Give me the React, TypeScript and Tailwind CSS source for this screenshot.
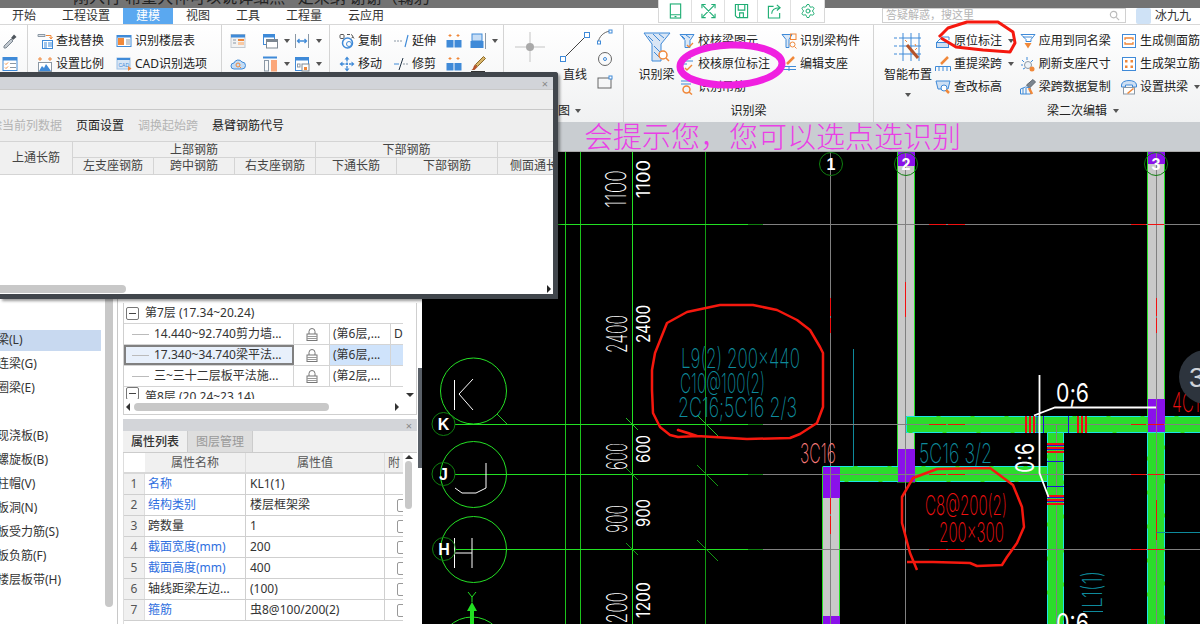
import type { ReactNode } from 'react'
import { Settings } from 'lucide-react'

const BLUE = '#3f8ad8'
const ORANGE = '#f0883a'
const GRAY = '#8b98a5'

function S({ children, w = 16, h = 16, vb = '0 0 16 16' }: { children: ReactNode; w?: number; h?: number; vb?: string }) {
  return (
    <svg width={w} height={h} viewBox={vb} fill="none" strokeWidth="1" className="shrink-0" aria-hidden="true">
      {children}
    </svg>
  )
}

const ICONS: Record<string, ReactNode> = {
  dropper: <><path d="M2 13l7-7 2 2-7 7H2z" fill="#c2c9d0" stroke="#7d8791" /><path d="M9 5l3-3.500 2.500 2.500L11 7z" fill="#4e555c" /></>,
  listCheck: <><rect x="1" y="1.500" width="14" height="13" stroke={BLUE} fill="#fff" /><rect x="1" y="1.500" width="14" height="3" fill={BLUE} /><path d="M3 7.500l1 1 2-2M3 11.500l1 1 2-2" stroke={ORANGE} /><path d="M8 7.500h6M8 11.500h6" stroke={GRAY} /></>,
  find: <><path d="M1 1.500h7v2H1z" fill="#dfe3e7" stroke={GRAY} /><path d="M9 2.500h5v3M12.500 4l1.500 2 1.500-2" stroke={ORANGE} /><rect x="5.500" y="7.500" width="10" height="8" fill="#fff" stroke={BLUE} /><path d="M7 10h3M7 12h3M7 14h3M12 9v5M14 9v5" stroke={BLUE} /></>,
  floorTable: <><rect x="1" y="2.500" width="14" height="11" stroke={BLUE} fill="#fff" /><rect x="1" y="2.500" width="14" height="2" fill={BLUE} /><rect x="2" y="5" width="6" height="7" fill={ORANGE} /><path d="M10 7h4M10 9h4M10 11h4" stroke={GRAY} /></>,
  scale: <><path d="M3 1v4M1 3h4M11 3h4M13 1v4" stroke={ORANGE} /><rect x="1.500" y="6.500" width="13" height="9" fill="#fff" stroke={GRAY} /><path d="M2 15l3-5 2 2 2-4 5 7z" fill={BLUE} /></>,
  cad: <><rect x="1" y="2" width="13" height="11" fill="#d7e6f5" stroke="#9cc0e6" /><rect x="1" y="2" width="13" height="2" fill={BLUE} /><text x="2.500" y="10.500" fontSize="5" fill={BLUE} fontFamily="Liberation Sans">CAD</text><path d="M12 10l3.500 2.500L12 15z" fill={ORANGE} /></>,
  panel: <><rect x="1" y="1.500" width="14" height="13" fill="#f2f2f2" stroke="#c3c9cf" /><rect x="1" y="1.500" width="14" height="3" fill={BLUE} /><path d="M3 7h3M3 10h3" stroke={GRAY} /><rect x="8" y="6" width="6" height="2" fill={ORANGE} /><rect x="8" y="9" width="6" height="3" fill="#f8c9a4" /></>,
  cloud: <><path d="M4 13a3 3 0 010-6 4.500 4.500 0 018-1 3.500 3.500 0 010 7z" fill="#c3dcf5" stroke={BLUE} /><circle cx="8" cy="9" r="2" stroke={ORANGE} /><path d="M9.500 10.500l1.500 1.500" stroke={ORANGE} /></>,
  windows: <><rect x="1.500" y="1.500" width="11" height="10" fill="#fff" stroke={BLUE} /><rect x="1.500" y="1.500" width="11" height="3" fill={BLUE} /><rect x="4.500" y="6.500" width="11" height="8.500" fill="#fff" stroke="#7d8791" /><rect x="4.500" y="6.500" width="11" height="2.500" fill="#7d8791" /></>,
  split: <><path d="M1 1.500h14" stroke={BLUE} strokeWidth="2" /><rect x="2.500" y="4.500" width="4" height="10.500" stroke={GRAY} /><rect x="9" y="4" width="6" height="11.500" fill="#fba77a" /></>,
  hArrow: <><path d="M1.500 1v14M14.500 1v14" stroke={GRAY} /><path d="M3.500 8h9M5.500 6l-2 2 2 2M10.500 6l2 2-2 2" stroke={BLUE} strokeWidth="1.300" /></>,
  board: <><rect x="1.500" y="1.500" width="13" height="13" stroke={BLUE} fill="#fff" /><rect x="1.500" y="1.500" width="13" height="3" fill={BLUE} /><rect x="8" y="8" width="7" height="7" fill="#fff" stroke="#7d8791" /><rect x="10" y="11" width="3" height="3" fill={ORANGE} /><rect x="3.500" y="8" width="2.500" height="3" stroke={GRAY} /></>,
  copy: <><rect x="1" y="1.500" width="4" height="4" rx="1" stroke="#555" /><path d="M8 1.500h3M12 1.500a3 3 0 012 2.500M12.500 5l1.500-1 1 1.500" stroke="#555" /><circle cx="8.500" cy="10" r="5" stroke={BLUE} strokeWidth="1.500" /><circle cx="10" cy="11" r="2.500" stroke={BLUE} /></>,
  move: <><path d="M8 0.500l-2.500 3h5zM8 15.500l-2.500-3h5zM0.500 8l3-2.500v5zM15.500 8l-3-2.500v5z" fill={BLUE} /><path d="M3 8h10M8 3v10" stroke={BLUE} strokeWidth="1.400" strokeDasharray="2.500 1" /></>,
  extend: <><path d="M1 8h9" stroke={GRAY} strokeDasharray="2 1" /><path d="M15 2l-3 12" stroke={BLUE} strokeWidth="1.200" /></>,
  trim: <><path d="M1 8h5" stroke={BLUE} /><path d="M10 8h5" stroke={GRAY} strokeDasharray="2 1" /><path d="M10 2L6 14" stroke="#234" /></>,
  cols: <><path d="M4 1v3M2.500 2.500h3M12 1v3M10.500 2.500h3" stroke={ORANGE} /><path d="M1 4l3 2 3-2M9 4l3 2 3-2" stroke={ORANGE} strokeWidth="0" /><rect x="0.500" y="7" width="7" height="7.500" fill={BLUE} /><rect x="8.500" y="7" width="7" height="7.500" fill={BLUE} /></>,
  stack: <><rect x="2" y="1" width="10" height="7" fill="#c6ddf5" stroke={BLUE} /><rect x="0.500" y="8" width="13" height="7" fill={BLUE} /><path d="M15.500 0v16" stroke={GRAY} /></>,
  brush: <><path d="M13.500 0.500l2 2-8 8-2-2z" fill="#d8b46a" stroke="#8a6a2a" /><path d="M5 8.500l2.500 2.500-3 3H1.500c2-1 1.500-3.500 3.500-5.500z" fill="#b5532a" /><path d="M1 15.500h14" stroke="#333" /></>,
  beamCheck: <><path d="M1 1.500h14l-4 6v7H6v-7z" fill="#dbe8f6" stroke={BLUE} /><path d="M3 3l3 3M7 2l4 3" stroke={BLUE} /><path d="M8 12l2 2 4-4" stroke={ORANGE} strokeWidth="1.300" /></>,
  stirrupCheck: <><path d="M2 2h10M2 5h12M2 8h6" stroke={BLUE} /><path d="M6 12l2 2 5-5" stroke={ORANGE} strokeWidth="1.400" /></>,
  beamFind: <><path d="M1 1.500h10l-3 5v8H5v-8z" fill="#dbe8f6" stroke={BLUE} /><rect x="9.500" y="1" width="5.500" height="5.500" stroke={ORANGE} /><circle cx="11.500" cy="11.500" r="2.500" stroke={ORANGE} /><path d="M13.500 13.500l2 2" stroke={ORANGE} /></>,
  hoop: <><path d="M2 2h10M2 5h10" stroke={BLUE} /><circle cx="7.500" cy="10.500" r="3.500" stroke={ORANGE} strokeWidth="1.500" /><path d="M10 13l3 2.500" stroke={ORANGE} strokeWidth="1.500" /></>,
  support: <><path d="M13 1L6 8" stroke={ORANGE} strokeWidth="2.500" /><path d="M1 10.500h14M1 13.500h14" stroke={BLUE} /><path d="M8 11v4" stroke={BLUE} /></>,
  origin: <><path d="M2 9l5-5h7v3" stroke={BLUE} /><rect x="1.500" y="9.500" width="12" height="5" fill="#cfe0f3" stroke={BLUE} /></>,
  rebeam: <><path d="M13 1L6 8" stroke={ORANGE} strokeWidth="2.500" /><path d="M0.500 15v-4.500h15V15M4 15v-4M8 15v-4M12 15v-4" stroke={BLUE} /></>,
  level: <><path d="M1 2h14l-2 8H3z" fill="#cfe0f3" stroke={BLUE} /><circle cx="9" cy="9" r="3" fill="#fff" stroke={BLUE} /><path d="M11 11l3 3" stroke={ORANGE} strokeWidth="2.500" /></>,
  applySame: <><path d="M1 1.500h14l-4 5v2H6v-2z" fill="#fff" stroke={BLUE} /><path d="M3 4h9" stroke={BLUE} /><path d="M4.500 10h7L8 15.500z" fill={ORANGE} /></>,
  refresh: <><path d="M7 1v3M2 4l2 2M13 4l-2 2M1 9h2M3 13l2-1" stroke={BLUE} /><circle cx="8" cy="9" r="3.500" fill="#eef3f8" stroke={GRAY} /><circle cx="12" cy="13" r="2.500" fill={ORANGE} /></>,
  spanCopy: <><path d="M13 0.500l2.500 2.500-6 6-3-3z" fill="#7b858f" stroke="#5d666f" /><path d="M0.500 15v-5l5-2 5 1v6z" stroke={BLUE} /><path d="M3 15v-6M6 15v-6" stroke={BLUE} /><path d="M9 9l3 6" stroke={ORANGE} strokeWidth="2.500" /></>,
  sideBar: <><rect x="1.500" y="1.500" width="13" height="13" fill="#fff" stroke={BLUE} /><path d="M4 7V5h8v2M4 9v2h8V9" stroke={ORANGE} strokeWidth="1.300" /></>,
  erect: <><rect x="1.500" y="1.500" width="13" height="13" fill="#fff" stroke={BLUE} /><path d="M4 4h2.500v2.500H4zM9.500 4H12v2.500H9.500zM4 9.500h2.500V12H4zM9.500 9.500H12V12H9.500z" fill={ORANGE} /></>,
  arch: <><path d="M0.500 6c0-6 15-6 15 0v2h-4V6h-7v2h-4z" stroke={BLUE} fill="#cfe0f3" /><rect x="2.500" y="8.500" width="11" height="6.500" fill="#fff" stroke={GRAY} /><path d="M6 14l6-5 1 1-6 5z" fill={ORANGE} /></>,
}

function Ico({ name }: { name: string }) {
  return <S>{ICONS[name]}</S>
}

function Caret({ className = '' }: { className?: string }) {
  return <span className={`inline-block w-0 h-0 border-x-[3.500px] border-x-transparent border-t-[4px] border-t-[#555] ${className}`} />
}

function Tool({ icon, label, caret }: { icon: string; label?: string; caret?: boolean }) {
  return (
    <div className="flex items-center h-[23px] gap-[3px] whitespace-nowrap">
      <Ico name={icon} />
      {label && <span>{label}</span>}
      {caret && <Caret className="ml-[3px]" />}
    </div>
  )
}

function Group({ width, label, children }: { width: string; label?: ReactNode; children: ReactNode }) {
  return (
    <div className={`${width} shrink-0 h-full flex flex-col border-r border-[#d4d4d4]`}>
      <div className="h-[75px] pt-[4px] flex">{children}</div>
      <div className="h-[22px] flex items-center justify-center gap-[6px]">{label}</div>
    </div>
  )
}

function Ribbon() {
  return (
    <div className="h-[97px] shrink-0 flex text-[12px] text-[#222] bg-gradient-to-b from-white to-[#f0f1f2] overflow-hidden">
      <Group width="w-[28px]">
        <div className="pl-[2px]">
          <Tool icon="dropper" />
          <Tool icon="listCheck" />
        </div>
      </Group>
      <Group width="w-[194px]">
        <div className="pl-[9px] w-[88px]">
          <Tool icon="find" label="查找替换" />
          <Tool icon="scale" label="设置比例" />
        </div>
        <div>
          <Tool icon="floorTable" label="识别楼层表" />
          <Tool icon="cad" label="CAD识别选项" />
        </div>
      </Group>
      <Group width="w-[108px]">
        <div className="pl-[8px] w-[40px]">
          <Tool icon="panel" />
          <Tool icon="cloud" />
        </div>
        <div className="w-[32px]">
          <Tool icon="windows" caret />
          <Tool icon="split" caret />
        </div>
        <div>
          <Tool icon="hArrow" caret />
          <Tool icon="board" caret />
        </div>
      </Group>
      <Group width="w-[174px]">
        <div className="pl-[9px] w-[63px]">
          <Tool icon="copy" label="复制" />
          <Tool icon="move" label="移动" />
        </div>
        <div className="w-[53px]">
          <Tool icon="extend" label="延伸" />
          <Tool icon="trim" label="修剪" />
        </div>
        <div className="w-[24px]">
          <Tool icon="cols" />
          <Tool icon="cols" />
        </div>
        <div>
          <Tool icon="stack" caret />
          <Tool icon="brush" />
        </div>
      </Group>
      <Group
        width="w-[120px]"
        label={
          <div className="w-full pl-[54px] flex items-center gap-[5px]">
            图 <Caret />
          </div>
        }
      >
        <div className="pl-[11px] w-[54px] pt-[3px]">
          <S w={30} h={30} vb="0 0 30 30">
            <path d="M15 0v30M0 15h30" stroke="#c4c4c4" />
            <circle cx="15" cy="15" r="4" fill="#a9a9a9" />
          </S>
        </div>
        <div className="flex flex-col items-center w-[34px] pt-[3px]">
          <S w={30} h={30} vb="0 0 30 30">
            <path d="M3 27L27 3" stroke="#444" />
            <rect x="0.500" y="24.500" width="5" height="5" fill="#fff" stroke={BLUE} />
            <rect x="24.500" y="0.500" width="5" height="5" fill="#fff" stroke={BLUE} />
          </S>
          <span className="mt-[4px]">直线</span>
        </div>
        <div className="pl-[5px]">
          <S><path d="M1 14C2 7 7 3 13 2" stroke="#666" /><rect x="12" y="1" width="3" height="3" fill="#fff" stroke={BLUE} /><rect x="0.500" y="12" width="3" height="3" fill="#fff" stroke={BLUE} /></S>
          <div className="h-[6px]" />
          <S><circle cx="8" cy="8" r="6.500" stroke="#666" /><circle cx="8" cy="8" r="1.500" stroke={BLUE} /></S>
          <div className="h-[8px]" />
          <S><rect x="1" y="3" width="13" height="10" stroke="#666" /><rect x="12" y="1" width="3" height="3" fill="#fff" stroke={BLUE} /></S>
        </div>
      </Group>
      <Group width="w-[250px]" label="识别梁">
        <div className="pl-[10px] w-[55px] flex flex-col items-center pt-[3px]">
          <S w={28} h={30} vb="0 0 28 30">
            <path d="M1 1h26l-9 11v17H9V12z" fill="#d9e6f5" stroke={BLUE} />
            <path d="M5 4l5 5M10 2l7 7M16 2l5 4M11 14l6 6M11 20l6 6" stroke={BLUE} />
            <circle cx="20" cy="23" r="4" fill="#fff" stroke={ORANGE} strokeWidth="1.500" />
            <path d="M23 26l3 3" stroke={ORANGE} strokeWidth="1.500" />
          </S>
          <span className="mt-[4px] whitespace-nowrap">识别梁</span>
        </div>
        <div className="w-[102px]">
          <Tool icon="beamCheck" label="校核梁图元" />
          <Tool icon="stirrupCheck" label="校核原位标注" />
          <Tool icon="hoop" label="识别吊筋" />
        </div>
        <div>
          <Tool icon="beamFind" label="识别梁构件" />
          <Tool icon="support" label="编辑支座" />
        </div>
      </Group>
      <div className="flex-1 h-full flex flex-col min-w-0">
        <div className="h-[75px] pt-[4px] flex">
          <div className="pl-[7px] w-[62px] flex flex-col items-center pt-[3px]">
            <S w={30} h={30} vb="0 0 30 30">
              <path d="M6 6h22M6 14h22M6 22h22M10 1v28M18 1v28M26 1v28" stroke={BLUE} />
              <path d="M14 13l11 13" stroke="#b5532a" strokeWidth="3" />
              <path d="M1 6h3M1 14h3M1 22h3" stroke={BLUE} />
              <path d="M12 8l2 2M22 18l2-2M22 12l1 2" stroke={ORANGE} />
            </S>
            <span className="mt-[4px] whitespace-nowrap">智能布置</span>
            <Caret className="mt-[9px]" />
          </div>
          <div className="w-[86px]">
            <Tool icon="origin" label="原位标注" caret />
            <Tool icon="rebeam" label="重提梁跨" caret />
            <Tool icon="level" label="查改标高" />
          </div>
          <div className="w-[103px]">
            <Tool icon="applySame" label="应用到同名梁" />
            <Tool icon="refresh" label="刷新支座尺寸" />
            <Tool icon="spanCopy" label="梁跨数据复制" />
          </div>
          <div>
            <Tool icon="sideBar" label="生成侧面筋" />
            <Tool icon="erect" label="生成架立筋" />
            <Tool icon="arch" label="设置拱梁" caret />
          </div>
        </div>
        <div className="h-[22px] flex items-center pl-[173px] gap-[6px]">
          梁二次编辑 <Caret />
        </div>
      </div>
    </div>
  )
}

const NAV = [
  { label: '梁(L)', active: true },
  { label: '连梁(G)' },
  { label: '圈梁(E)' },
  { label: '' },
  { label: '现浇板(B)' },
  { label: '螺旋板(B)' },
  { label: '柱帽(V)' },
  { label: '板洞(N)' },
  { label: '板受力筋(S)' },
  { label: '板负筋(F)' },
  { label: '楼层板带(H)' },
]

function LeftNav() {
  return (
    <div className="w-[118px] shrink-0 h-full flex border-r border-[#c8c8c8] bg-white text-[12px] text-[#333]">
      <div className="w-[105px] pt-[176px]">
        {NAV.map((n, i) => (
          <div key={i} className="h-[24px] flex items-center">
            <div className={`w-[101px] h-[21px] flex items-center whitespace-nowrap overflow-hidden ${n.active ? 'bg-[#c8d9f0]' : ''}`}>
              <span className="-ml-[3px]">{n.label}</span>
            </div>
          </div>
        ))}
      </div>
      <div className="w-[8px] h-[455px] bg-[#c8c8c8] rounded-b-[4px]" />
    </div>
  )
}

const TREE_ROWS = [
  { name: '14.440~92.740剪力墙...', floor: '(第6层,...', extra: 'D' },
  { name: '17.340~34.740梁平法...', floor: '(第6层,...', extra: '', selected: true },
  { name: '三~三十二层板平法施...', floor: '(第2层,...', extra: '' },
]

const PROPS = [
  { name: '名称', value: 'KL1(1)', link: true, check: false },
  { name: '结构类别', value: '楼层框架梁', link: true, check: true },
  { name: '跨数量', value: '1', link: false, check: true },
  { name: '截面宽度(mm)', value: '200', link: true, check: true },
  { name: '截面高度(mm)', value: '400', link: true, check: true },
  { name: '轴线距梁左边...', value: '(100)', link: false, check: true },
  { name: '箍筋', value: '虫8@100/200(2)', link: true, check: true },
]

function Lock() {
  return (
    <svg width="12" height="13" viewBox="0 0 12 13" fill="none" aria-hidden="true">
      <path d="M3 6V3.500a3 3 0 016 0V6" stroke="#777" />
      <rect x="1" y="6" width="10" height="6.500" fill="#fff" stroke="#777" />
      <path d="M1 8.500h10M1 10.500h10" stroke="#999" />
    </svg>
  )
}

function TreePanel() {
  return (
    <div className="relative w-[304px] shrink-0 h-full flex flex-col bg-white text-[12px] text-[#333]">
      <div className="h-[263px] pt-[151px] pl-[5px] flex flex-col">
        <div className="w-[294px] border border-t-0 border-[#cfcfcf] flex flex-col h-[112px]">
          <div className="flex flex-1 min-h-0">
            <div className="w-[279px] overflow-hidden">
              <div className="h-[21px] flex items-center gap-[6px] pl-[2px] border-b border-[#d4d4d4]">
                <span className="w-[13px] h-[13px] border border-[#777] rounded-[2px] flex items-center justify-center">
                  <span className="w-[7px] h-px bg-[#444]" />
                </span>
                第7层 (17.34~20.24)
              </div>
              {TREE_ROWS.map((r) => (
                <div key={r.name} className="h-[21px] grid grid-cols-[170px_36px_61px_12px] border-b border-[#d4d4d4]">
                  <div className={`flex items-center gap-[5px] pl-[8px] border-r border-[#d4d4d4] whitespace-nowrap overflow-hidden ${r.selected ? 'bg-[#e8f0fb] outline-2 -outline-offset-2 outline-[#808080]' : ''}`}>
                    <span className="w-[17px] h-px bg-[#bbb] shrink-0" />
                    {r.name}
                  </div>
                  <div className="flex items-center justify-center border-r border-[#d4d4d4]">
                    <Lock />
                  </div>
                  <div className={`flex items-center pl-[3px] border-r border-[#d4d4d4] whitespace-nowrap overflow-hidden ${r.selected ? 'bg-[#cfe3fb]' : ''}`}>{r.floor}</div>
                  <div className={`flex items-center pl-[3px] overflow-hidden ${r.selected ? 'bg-[#cfe3fb]' : ''}`}>{r.extra}</div>
                </div>
              ))}
              <div className="h-[12px] overflow-hidden flex gap-[6px] pl-[2px]">
                <span className="w-[13px] h-[13px] shrink-0 border border-[#777] rounded-[2px] flex items-center justify-center">
                  <span className="w-[7px] h-px bg-[#444]" />
                </span>
                <span className="leading-[19px] whitespace-nowrap">第8层 (20.24~23.14)</span>
              </div>
            </div>
            <div className="flex-1 flex justify-center items-end pb-[2px]">
              <span className="w-0 h-0 border-x-[4px] border-x-transparent border-t-[4px] border-t-[#333]" />
            </div>
          </div>
          <div className="h-[15px] flex items-center pl-[2px] gap-[2px]">
            <span className="w-0 h-0 border-y-[4px] border-y-transparent border-r-[4px] border-r-[#333]" />
            <div className="w-[195px] h-[8px] ml-[2px] rounded-full bg-[#c8c8c8]" />
            <span className="ml-[64px] w-0 h-0 border-y-[4px] border-y-transparent border-l-[4px] border-l-[#333]" />
          </div>
        </div>
      </div>
      <div className="flex-1 pl-[5px] pt-[4px] min-h-0 flex flex-col overflow-hidden">
        <div className="w-[294px] h-[12px] bg-[#d3d5d9] flex items-center justify-end pr-[5px] text-[#888] text-[11px] leading-none shrink-0">×</div>
        <div className="w-[294px] h-[22px] flex bg-[#f0f0f0] border-b border-[#ccc] shrink-0">
          <div className="w-[65px] flex items-center justify-center font-medium border-r border-[#ccc]">属性列表</div>
          <div className="w-[65px] flex items-center justify-center text-[#999] bg-[#dedede] border-r border-[#ccc]">图层管理</div>
        </div>
        <div className="flex min-h-0 flex-1 w-[294px] border-l border-[#ddd]">
          <div className="w-[279px] shrink-0 overflow-hidden">
            <div className="h-[21px] grid grid-cols-[21px_101px_139px_18px] border-b-2 border-[#d8d8d8] text-[#555]">
              <div className="bg-white" />
              <div className="flex items-center justify-center bg-[#f0f0f0] border-r border-[#ddd]">属性名称</div>
              <div className="flex items-center justify-center bg-[#f0f0f0] border-r border-[#ddd]">属性值</div>
              <div className="flex items-center pl-[3px] bg-[#f0f0f0] overflow-hidden">附</div>
            </div>
            {PROPS.map((p, i) => (
              <div key={p.name} className="h-[21px] grid grid-cols-[21px_101px_139px_18px] border-b border-[#cfcfcf]">
                <div className="flex items-center justify-center bg-[#f0f0f0] text-[#555] border-r border-[#ddd]">{i + 1}</div>
                <div className={`flex items-center pl-[3px] border-r border-[#cfcfcf] whitespace-nowrap ${p.link ? 'text-[#2f6fe0]' : ''}`}>{p.name}</div>
                <div className="flex items-center pl-[4px] border-r border-[#cfcfcf]">{p.value}</div>
                <div className="flex items-center pl-[12px] overflow-hidden">
                  {p.check && <span className="w-[10px] h-[13px] shrink-0 border border-[#999] rounded-[2px]" />}
                </div>
              </div>
            ))}
          </div>
          <div className="flex-1 flex flex-col items-center pt-[2px] pr-[3px]">
            <span className="w-0 h-0 border-x-[4px] border-x-transparent border-b-[4px] border-b-[#333]" />
            <div className="w-[7px] h-[48px] mt-[2px] rounded-full bg-[#c8c8c8]" />
          </div>
        </div>
      </div>
      {/* splitter handle beside the canvas */}
      <div className="absolute right-0 top-[216px] w-[4px] h-[100px] bg-[#5a6068]" />
    </div>
  )
}

function Dialog() {
  const headCell = 'flex items-center justify-center text-[#444] border-r border-[#d4d4d4] whitespace-nowrap overflow-hidden'
  return (
    <div className="absolute left-0 top-[72px] w-[558px] h-[227px] bg-white border-[5px] border-l-0 border-[#41464c] rounded-tr-[3px] flex flex-col text-[12px] shadow-[2px_2px_3px_rgba(0,0,0,0.4)]">
      <div className="h-[12px] bg-[#d2d4d9] flex items-center justify-end pr-[5px] text-[#888] text-[11px] leading-none">×</div>
      <div className="h-[21px] bg-[#eeeeee] border-y border-[#c8c8c8]" />
      <div className="h-[31px] bg-[#eeeeee] flex items-center whitespace-nowrap relative overflow-hidden">
        <span className="w-[76px] flex justify-end text-[#b4b4b4] pr-[14px] shrink-0">除当前列数据</span>
        <span className="text-[#222] w-[62px] shrink-0">页面设置</span>
        <span className="text-[#b4b4b4] w-[74px] shrink-0">调换起始跨</span>
        <span className="text-[#222]">悬臂钢筋代号</span>
      </div>
      <div className="h-[34px] bg-[#f0f0f0] border-y border-[#d4d4d4] grid grid-cols-[73px_81px_81px_81px_81px_101px_1fr] grid-rows-[16px_16px]">
        <div className={`${headCell} row-span-2`}>上通长筋</div>
        <div className={`${headCell} col-span-3 border-b`}>上部钢筋</div>
        <div className={`${headCell} col-span-2 border-b`}>下部钢筋</div>
        <div className="border-b border-[#d4d4d4]" />
        <div className={headCell}>左支座钢筋</div>
        <div className={headCell}>跨中钢筋</div>
        <div className={headCell}>右支座钢筋</div>
        <div className={headCell}>下通长筋</div>
        <div className={headCell}>下部钢筋</div>
        <div className="flex items-center pl-[12px] text-[#444] whitespace-nowrap overflow-hidden">侧面通长</div>
      </div>
      <div className="flex-1 flex items-end pb-[1px] justify-between pr-[2px]">
        <div className="w-[126px] h-[8px] rounded-r-full bg-[#c8c8c8]" />
        <span className="w-0 h-0 border-y-[4px] border-y-transparent border-l-[4px] border-l-[#222]" />
      </div>
    </div>
  )
}

function T({ x, y, len, size, fill, rot, bold, children }: { x: number; y: number; len: number; size: number; fill: string; rot?: boolean; bold?: boolean; children: string }) {
  return (
    <text
      x={x}
      y={y}
      fontSize={size}
      fill={fill}
      fontFamily="Inter, Liberation Sans, sans-serif"
      fontWeight={bold ? 400 : 200}
      textLength={len}
      lengthAdjust="spacingAndGlyphs"
      transform={rot ? `rotate(-90 ${x} ${y})` : undefined}
    >
      {children}
    </text>
  )
}

const GRID_H = [224, 424, 474, 549]
const CYAN = '#0e8a9c'
const RED_DRAW = '#f5180e'

function Column({ x, top, bottom }: { x: number; top: number; bottom: number }) {
  return <rect x={x} y={top} width={17} height={bottom - top} fill="#c9c9c9" stroke="#25e025" />
}

function GreenBeam({ x, y, w, h }: { x: number; y: number; w: number; h: number }) {
  return (
    <>
      <rect x={x} y={y} width={w} height={h} fill="#2bdc2b" />
      <rect x={x + 0.500} y={y + 0.500} width={w - 1} height={h - 1} fill="none" stroke="#19e6e6" strokeDasharray="30 4" />
    </>
  )
}

function Bubble({ x, y, label }: { x: number; y: number; label: string }) {
  return (
    <>
      <circle cx={x} cy={y} r={11.500} fill="none" stroke="#0f7f0f" />
      <text x={x} y={y + 6} textAnchor="middle" fontSize={16} fontWeight="700" fill="#fff" fontFamily="Liberation Sans, sans-serif">
        {label}
      </text>
    </>
  )
}

function HStripes({ y }: { y: number }) {
  return (
    <>
      <rect x={1047} y={y} width={17} height={2} fill="#f01010" />
      <rect x={1047} y={y + 2} width={17} height={1} fill="#1818d8" />
      <rect x={1047} y={y + 4} width={17} height={2} fill="#f01010" />
      <rect x={1047} y={y + 6} width={17} height={1} fill="#1818d8" />
      <rect x={1047} y={y + 8} width={17} height={2} fill="#f01010" />
    </>
  )
}

function VStripes({ x }: { x: number }) {
  return (
    <>
      {[0, 4, 8].map((o) => (
        <rect key={o} x={x + o} y={416} width={2} height={17} fill="#f01010" />
      ))}
    </>
  )
}

function CadCanvas() {
  return (
    <svg width="778" height="472" viewBox="422 152 778 472" className="block shrink-0 bg-black" aria-hidden="true">
      {[565.500, 580.500].map((x) => <path key={x} d={`M${x} 152V624`} stroke="#1cc21c" />)}
      <path d="M632.500 152V624" stroke="#22e022" />
      <path d="M705.500 152V624" stroke="#139a13" />
      <path d="M830.500 152V624M905.500 152V624M1156.500 152V624" stroke="#808080" />
      {GRID_H.map((y) => (
        <g key={y}>
          <path d={`M${y === 224 ? 555 : 455} ${y + 0.500}H748`} stroke="#22e022" />
          <path d={`M748 ${y + 0.500}H763`} stroke="#0f7f0f" />
          <path d={`M763 ${y + 0.500}H1200`} stroke="#808080" />
          {y !== 224 && <path d={`M626 ${y - 6}l12 12M697 ${y - 9}l21 21`} stroke={y === 424 ? '#22c022' : '#139a13'} />}
        </g>
      ))}

      <circle cx="473.500" cy="391" r="33" fill="none" stroke="#25e025" />
      <circle cx="473.500" cy="474.500" r="33" fill="none" stroke="#25e025" />
      <circle cx="473.500" cy="549.500" r="33" fill="none" stroke="#25e025" />
      <circle cx="472" cy="650" r="33" fill="none" stroke="#25e025" />
      <path d="M497 414l10 10" stroke="#25c025" />
      <path d="M454.500 380v30M473 379l-14 15 14 16" stroke="#fff" fill="none" />
      <path d="M486 463v25l-10 5h-14l-7-5" stroke="#fff" fill="none" />
      <path d="M454.500 538v30M472 538v30M454.500 553H472" stroke="#fff" fill="none" />
      <Bubble x={443.500} y={424} label="K" />
      <Bubble x={443.500} y={474} label="J" />
      <Bubble x={444} y={549} label="H" />
      <path d="M472 602l5 9h-3v13h-4v-13h-3z" fill="#22e022" />
      <path d="M468 592l4 5 4-5M472 597v5" stroke="#22e022" fill="none" />

      <T x={626} y={208} len={38} size={28} fill="#fff" rot>1100</T>
      <T x={650} y={198} len={38} size={18} fill="#fff" rot bold>1100</T>
      <T x={627} y={353} len={38} size={28} fill="#fff" rot>2400</T>
      <T x={650} y={343} len={38} size={18} fill="#fff" rot bold>2400</T>
      <T x={627} y={470} len={27} size={28} fill="#fff" rot>600</T>
      <T x={650} y={463} len={28} size={18} fill="#fff" rot bold>600</T>
      <T x={627} y={533} len={28} size={28} fill="#fff" rot>900</T>
      <T x={650} y={527} len={28} size={18} fill="#fff" rot bold>900</T>
      <T x={627} y={630} len={38} size={28} fill="#fff" rot>1200</T>
      <T x={650} y={618} len={36} size={18} fill="#fff" rot bold>1200</T>

      <T x={681} y={368} len={119} size={27} fill={CYAN}>L9(2) 200x440</T>
      <T x={680} y={393} len={85} size={27} fill={CYAN}>C10@100(2)</T>
      <T x={678} y={417} len={119} size={27} fill={CYAN}>2C16;5C16 2/3</T>

      <path d="M853.500 349V467" stroke={CYAN} />

      <Column x={897.500} top={152} bottom={482} />
      <Column x={1147.500} top={152} bottom={432} />
      <Column x={822.500} top={467} bottom={640} />
      <GreenBeam x={906} y={416} w={300} h={17} />
      <GreenBeam x={823} y={466} w={225} h={16} />
      <GreenBeam x={1047} y={432} w={17} h={200} />
      <GreenBeam x={1147} y={432} w={18} h={200} />
      <rect x={823} y={467} width={17} height={31} fill="#8a10ea" />
      <rect x={823} y={616} width={17} height={8} fill="#8a10ea" />
      <rect x={898} y={152} width={17} height={14} fill="#8a10ea" />
      <rect x={898} y={449} width={17} height={33} fill="#8a10ea" />
      <rect x={1148} y={152} width={17} height={12} fill="#8a10ea" />
      <rect x={1148} y={399} width={17} height={33} fill="#8a10ea" />

      <path d="M830.500 467V624M905.500 152V482M1156.500 152V624M1056.500 424V624" stroke="#808080" />
      {GRID_H.map((y) => (
        <path key={y} d={`M763 ${y + 0.500}H1200`} stroke="#808080" />
      ))}
      {GRID_H.map((y) => (
        <path key={y} d={`M929 ${y + 0.500}H946M948 ${y + 0.500}H965M1131 ${y + 0.500}H1146M1148 ${y + 0.500}H1164`} stroke="#f01010" />
      ))}
      <path d="M830.500 298V316M830.500 318V333M905.500 282V317M1156.500 298V316M1156.500 318V333M830.500 498V514M830.500 516V534M1156.500 500V540" stroke="#f01010" />
      <path d="M1156.500 532.500H1200" stroke={CYAN} />

      <VStripes x={1025} />
      <VStripes x={1077} />
      <path d="M1043.500 416v17M1068.500 416v17M1037 416v17" stroke="#1818d8" />
      <HStripes y={443} />
      <HStripes y={495} />
      <path d="M1047 461.500h17M1047 486.500h17" stroke="#1818d8" />

      <T x={800} y={463} len={36} size={27} fill="#f87a7a">3C16</T>
      <T x={919} y={463} len={73} size={27} fill={CYAN}>5C16 3/2</T>
      <T x={925} y={515} len={82} size={27} fill="#f01010">C8@200(2)</T>
      <T x={939} y={542} len={65} size={27} fill="#f01010">200x300</T>
      <T x={1172} y={412} len={28} size={27} fill="#f01010">4C1</T>
      <T x={1102} y={608} len={37} size={27} fill={CYAN} rot>L1(1)</T>
      <path d="M1083 611.500h20" stroke={CYAN} />

      <path d="M1156 407.500H1055l-21 8M1039.500 375v98l9 24" stroke="#fff" strokeWidth="1.800" fill="none" />
      <T x={1056} y={402} len={33} size={26} fill="#fff" bold>0;6</T>
      <T x={1034} y={473} len={30} size={26} fill="#fff" rot bold>0:6</T>
      <T x={1056} y={632} len={33} size={26} fill="#fff" bold>0:6</T>

      <Bubble x={831} y={164} label="1" />
      <Bubble x={906} y={164} label="2" />
      <Bubble x={1156} y={164} label="3" />

      <path
        d="M652 370L655 353L667 323L687 312L720 305L753 305L777 310L797 320L810 330L820 347L823 353L823 407L817 423L800 434L790 438L747 439L697 436L678 430L688 433L697 436L678 437L670 435L660 427L653 413L652 390Z"
        fill="none"
        stroke={RED_DRAW}
        strokeWidth="2.500"
        strokeLinejoin="round"
      />
      <path
        d="M907 562L933 562L970 563L977 566L1002 565L1007 557L1017 543L1024 527L1022 507L1013 485L990 468L937 469L913 478L902 497L902 523L910 553L917 570"
        fill="none"
        stroke={RED_DRAW}
        strokeWidth="2.500"
        strokeLinejoin="round"
      />
      <circle cx="1206" cy="377" r="27" fill="#2d343d" />
      <text x="1189" y="387" fontSize="28" fill="#cfd3d8" fontFamily="Liberation Sans, sans-serif">3</text>
    </svg>
  )
}

const FLOAT_ICONS = [
  <svg key="tablet" width="15" height="16" viewBox="0 0 16 16" fill="none" stroke="#1fae74" strokeWidth="1.200" aria-hidden="true"><rect x="2.500" y="0.500" width="11" height="15" /><path d="M2.500 12h11M7 14h2" /></svg>,
  <svg key="expand" width="15" height="16" viewBox="0 0 16 16" fill="none" stroke="#1fae74" strokeWidth="1.200" aria-hidden="true"><path d="M2 2l12 12M14 2L2 14M1 5V1h4M11 1h4v4M1 11v4h4M15 11v4h-4" /></svg>,
  <svg key="save" width="15" height="16" viewBox="0 0 16 16" fill="none" stroke="#1fae74" strokeWidth="1.200" aria-hidden="true"><path d="M1.500 1h13v14h-11l-2-2z" /><path d="M4.500 1v6h7V1M6 15v-5h4v5" /></svg>,
  <svg key="share" width="15" height="16" viewBox="0 0 16 16" fill="none" stroke="#1fae74" strokeWidth="1.200" aria-hidden="true"><path d="M7 3H1.500v12.500h12V10" /><path d="M5 11c0-4 3-6.500 8-6.500M10.500 1.500l3.500 3-3.500 3" /></svg>,
]

function FloatBar() {
  return (
    <div className="absolute left-[658px] top-0 h-[23px] flex bg-white border border-t-0 border-[#d8d8d8]">
      {FLOAT_ICONS.map((ic) => (
        <div key={ic.key} className="w-[33px] flex items-center justify-center border-r border-[#e0e0e0]">
          {ic}
        </div>
      ))}
      <div className="w-[33px] flex items-center justify-center">
        <Settings size={16} color="#1fae74" strokeWidth={1.500} />
      </div>
    </div>
  )
}

export default function App() {
  return (
    <div className="relative w-[1200px] h-[624px] overflow-hidden flex flex-col bg-white [font-family:'Noto_Sans','Noto_Sans_CJK_SC',sans-serif]">
      {/* forum page strip behind the window */}
      <div className="h-[8px] bg-[#737373] overflow-hidden shrink-0">
        <div className="pl-[73px] -mt-[13px] text-[16px] leading-[20px] text-[#222] whitespace-pre">刚入行 希望大神可以说详细点   定来纳 谢谢（鞠躬</div>
      </div>

      {/* tabs */}
      <div className="h-[17px] shrink-0 flex items-stretch bg-white border-b border-[#d8d8d8] text-[12px] text-[#333] whitespace-nowrap">
        {['开始', '工程设置', '建模', '视图', '工具', '工程量', '云应用'].map((t) => (
          <div
            key={t}
            className={`flex shrink-0 items-center justify-center px-[13px] ${t === '开始' ? '-ml-px' : ''} ${t === '建模' ? 'bg-[#5aa8f0] text-white' : ''}`}
          >
            {t}
          </div>
        ))}
        <div className="ml-[485px] w-[244px] h-[15px] shrink-0 border border-[#d0d0d0] flex items-center justify-between pl-[3px] pr-[5px] text-[11px] text-[#b5b5b5]">
          答疑解惑，搜这里
          <svg width="11" height="11" viewBox="0 0 12 12" fill="none" stroke="#bbb" strokeWidth="1.300" aria-hidden="true">
            <circle cx="5" cy="5" r="3.500" />
            <path d="M8 8l3 3" />
          </svg>
        </div>
        <div className="ml-[10px] flex items-center gap-[4px]">
          <span className="w-[15px] h-[16px] bg-[#cfe2f6] rounded-[2px]" />
          冰九九
        </div>
      </div>

      <Ribbon />

      {/* hint typed over the screenshot */}
      <div className="h-[30px] shrink-0 bg-[#c9cdd1] border-b border-[#aaa] pl-[584px] flex items-center text-[29px] leading-none text-[#ea3fe6] font-light whitespace-nowrap">
        会提示您，您可以选点选识别
      </div>

      <div className="flex-1 flex min-h-0">
        <LeftNav />
        <TreePanel />
        <CadCanvas />
      </div>

      <Dialog />
      <FloatBar />

      {/* hand-drawn marks on the ribbon */}
      <svg width="1200" height="122" viewBox="0 0 1200 122" className="absolute left-0 top-0 pointer-events-none" fill="none" aria-hidden="true">
        <ellipse cx="731" cy="65" rx="51" ry="20" stroke="#f020e0" strokeWidth="7" transform="rotate(-2 731 65)" />
        <path d="M939 37L948 28L967 22L998 22L1013 32L1015 43L1010 52L983 50L956 47L941 38" stroke={RED_DRAW} strokeWidth="3" strokeLinejoin="round" />
      </svg>
    </div>
  )
}
